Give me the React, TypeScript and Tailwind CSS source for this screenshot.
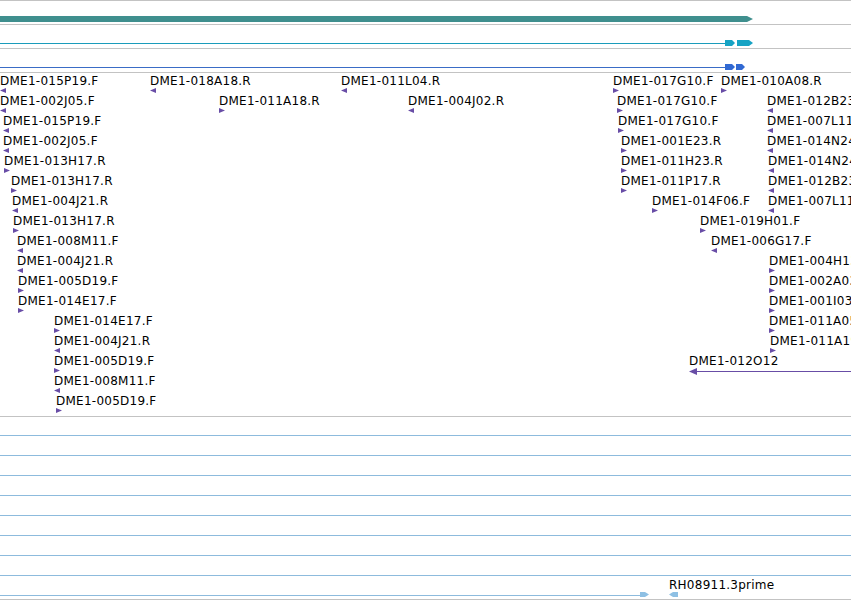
import type { ReactNode } from 'react';

type Strand = 'L' | 'R';
type Read = [number, string, Strand];

const ROW = 20;
const READ_COLOR = '#684da6';
const EST_COLOR = '#8dbbdd';

// one array per row of the clone-end track, [x, name, strand]
const readRows: Read[][] = [
  [[0, 'DME1-015P19.F', 'L'], [150, 'DME1-018A18.R', 'L'], [341, 'DME1-011L04.R', 'L'], [613, 'DME1-017G10.F', 'R'], [721, 'DME1-010A08.R', 'R']],
  [[0, 'DME1-002J05.F', 'L'], [219, 'DME1-011A18.R', 'R'], [408, 'DME1-004J02.R', 'L'], [617, 'DME1-017G10.F', 'R'], [767, 'DME1-012B23.R', 'L']],
  [[3, 'DME1-015P19.F', 'L'], [618, 'DME1-017G10.F', 'R'], [767, 'DME1-007L11.R', 'L']],
  [[3, 'DME1-002J05.F', 'L'], [621, 'DME1-001E23.R', 'R'], [767, 'DME1-014N24.R', 'L']],
  [[4, 'DME1-013H17.R', 'R'], [621, 'DME1-011H23.R', 'R'], [768, 'DME1-014N24.F', 'L']],
  [[11, 'DME1-013H17.R', 'R'], [621, 'DME1-011P17.R', 'R'], [768, 'DME1-012B23.F', 'L']],
  [[12, 'DME1-004J21.R', 'L'], [652, 'DME1-014F06.F', 'R'], [768, 'DME1-007L11.F', 'L']],
  [[13, 'DME1-013H17.R', 'R'], [700, 'DME1-019H01.F', 'R']],
  [[17, 'DME1-008M11.F', 'L'], [711, 'DME1-006G17.F', 'L']],
  [[17, 'DME1-004J21.R', 'L'], [769, 'DME1-004H13.R', 'R']],
  [[18, 'DME1-005D19.F', 'R'], [769, 'DME1-002A03.R', 'R']],
  [[18, 'DME1-014E17.F', 'R'], [769, 'DME1-001I03.R', 'R']],
  [[54, 'DME1-014E17.F', 'R'], [769, 'DME1-011A05.R', 'R']],
  [[54, 'DME1-004J21.R', 'L'], [770, 'DME1-011A19.R', 'R']],
  [[54, 'DME1-005D19.F', 'R']],
  [[54, 'DME1-008M11.F', 'L']],
  [[56, 'DME1-005D19.F', 'R']],
];

function Track({ className, children }: { className: string; children: ReactNode }) {
  return <div className={`relative shrink-0 overflow-hidden border-b border-[#c3c3c3] ${className}`}>{children}</div>;
}

function Label({ x, row, children }: { x: number; row: number; children: ReactNode }) {
  return (
    <div
      className="absolute whitespace-nowrap text-[12px] leading-[14px] tracking-[0.25px] text-black"
      style={{ left: x, top: row * ROW + 1 }}
    >
      {children}
    </div>
  );
}

function ReadMark({ x, row, name, strand }: { x: number; row: number; name: string; strand: Strand }) {
  return (
    <>
      <Label x={x} row={row}>
        {name}
      </Label>
      <svg className="absolute" style={{ left: x, top: row * ROW + 15 }} width={6} height={5}>
        <polygon points={strand === 'L' ? '0,2.5 6,0 6,5' : '6,2.5 0,0 0,5'} fill={READ_COLOR} />
      </svg>
    </>
  );
}

export default function App() {
  return (
    <div className="flex h-[600px] w-full flex-col overflow-hidden border-t border-[#c3c3c3] bg-white font-['DejaVu_Sans',sans-serif]">
      {/* gene span */}
      <Track className="h-[24px]">
        <svg className="absolute left-0 top-0" width={851} height={23}>
          <polygon points="0,15 747,15 753,18 747,21 0,21" fill="#3f8f8e" />
        </svg>
      </Track>

      {/* transcript */}
      <Track className="h-[24px]">
        <svg className="absolute left-0 top-0" width={851} height={23}>
          <rect x={0} y={18} width={726} height={1} fill="#1a9cbb" />
          <polygon points="725,15 732,15 735,18 732,21 725,21" fill="#17a3c4" />
          <polygon points="737,15 749,15 753,18 749,21 737,21" fill="#17a3c4" />
        </svg>
      </Track>

      {/* CDS */}
      <Track className="h-[24px]">
        <svg className="absolute left-0 top-0" width={851} height={23}>
          <rect x={0} y={18} width={726} height={1} fill="#3a6cc6" />
          <polygon points="725,15 732,15 735,18 732,21 725,21" fill="#3169d3" />
          <polygon points="736,15 742,15 745,18 742,21 736,21" fill="#3169d3" />
        </svg>
      </Track>

      {/* clone ends */}
      <Track className="h-[344px]">
        {readRows.map((reads, row) =>
          reads.map(([x, name, strand]) => <ReadMark key={`${row}-${x}`} x={x} row={row} name={name} strand={strand} />),
        )}
        <Label x={689} row={14}>
          DME1-012O12
        </Label>
        <svg className="absolute left-0" style={{ top: 14 * ROW }} width={851} height={22}>
          <rect x={697} y={18} width={154} height={1} fill={READ_COLOR} />
          <polygon points="689,18.5 697,15 697,22" fill={READ_COLOR} />
        </svg>
      </Track>

      {/* ESTs */}
      <Track className="h-[183px]">
        <svg className="absolute left-0 top-0" width={851} height={182}>
          {Array.from({ length: 8 }, (_, i) => (
            <rect key={i} x={0} y={i * ROW + 18} width={851} height={1} fill={EST_COLOR} />
          ))}
          <rect x={0} y={178} width={641} height={1} fill={EST_COLOR} />
          <polygon points="640,175 645,175 649,177.5 645,180 640,180" fill="#8ec0e4" />
          <polygon points="669,177.5 673,175 678,175 678,180 673,180" fill="#8ec0e4" />
        </svg>
        <Label x={669} row={8}>
          RH08911.3prime
        </Label>
      </Track>
    </div>
  );
}
